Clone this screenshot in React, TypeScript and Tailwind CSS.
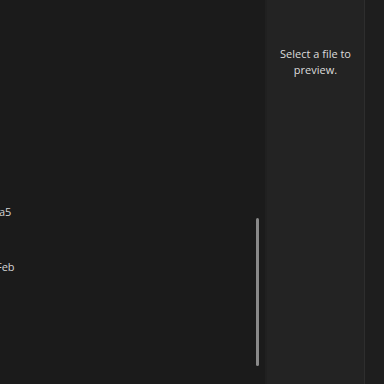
export default function App() {
  return (
    <div
      className="flex h-[384px] w-[384px] overflow-hidden bg-[#1b1b1b] text-[#d4d4d4]"
      style={{ fontFamily: '"Open Sans", "Noto Sans", sans-serif' }}
    >
      {/* file list, scrolled horizontally */}
      <div className="relative w-[265px] shrink-0 overflow-hidden bg-[#1b1b1b]">
        <div className="flex flex-col pt-[205px] text-[11px] leading-[14px]">
          <div className="-ml-[1px] h-[55px]">a5</div>
          <div className="-ml-[4px]">Feb</div>
        </div>
        <div className="absolute left-[256px] top-[218px] h-[148px] w-[3px] rounded-sm bg-[#8a8a8a]" />
      </div>
      <div className="w-[2px] shrink-0 bg-[#202020]" />
      {/* preview */}
      <div className="flex w-[98px] shrink-0 justify-center border-r border-[#2e2e2e] bg-[#232323] pt-[46px]">
        <p className="w-[80px] text-center text-[11px] leading-[16px] text-[#dcdcdc]">
          Select a file to preview.
        </p>
      </div>
      <div className="flex-1 bg-[#1e1e1e]" />
    </div>
  );
}
